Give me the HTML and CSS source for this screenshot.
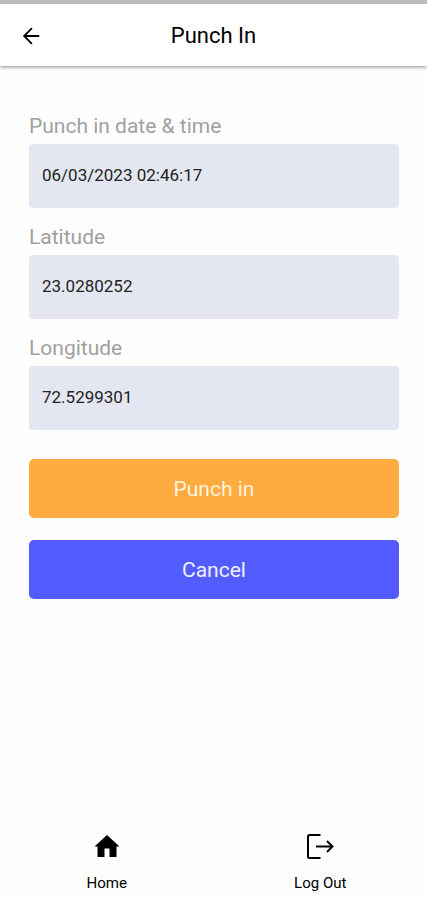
FILE: index.html
```html
<!DOCTYPE html>
<html lang="en">
<head>
<meta charset="utf-8">
<meta name="viewport" content="width=device-width, initial-scale=1">
<title>Punch In</title>
<link rel="stylesheet" href="styles.css">
</head>
<body>
<header class="app-bar">
  <button class="back" type="button" aria-label="Back">
    <svg viewBox="0 0 24 24" width="24" height="24" fill="none" stroke="currentColor" stroke-width="2"><path d="M21 12H4.500M13 3.500L4.500 12l8.500 8.500"/></svg>
  </button>
  <h1 class="title">Punch In</h1>
</header>
<main class="content">
  <form class="form">
    <div class="field">
      <label for="time">Punch in date &amp; time</label>
      <input id="time" type="text" value="06/03/2023 02:46:17" readonly>
    </div>
    <div class="field">
      <label for="lat">Latitude</label>
      <input id="lat" type="text" value="23.0280252" readonly>
    </div>
    <div class="field">
      <label for="lng">Longitude</label>
      <input id="lng" type="text" value="72.5299301" readonly>
    </div>
    <div class="actions">
      <button class="btn btn-primary" type="button">Punch in</button>
      <button class="btn btn-cancel" type="button">Cancel</button>
    </div>
  </form>
</main>
<nav class="tabs">
  <a class="tab" href="#home">
    <svg viewBox="0 0 30 30" width="30" height="30" fill="currentColor"><path d="M12.500 26v-8.500h5V26h7V15.500h3L15 4 2.500 15.500h3V26z"/></svg>
    <span>Home</span>
  </a>
  <a class="tab" href="#logout">
    <svg viewBox="0 0 30 30" width="30" height="30" fill="none" stroke="currentColor" stroke-width="2"><path d="M15.500 4H4.500Q3 4 3 5.500v20Q3 27 4.500 27H15.500M11 15.500H27.500M22 10L27.500 15.500 22 21"/></svg>
    <span>Log Out</span>
  </a>
</nav>
</body>
</html>
```
FILE: styles.css
```css
* {
  box-sizing: border-box;
}

body {
  margin: 0;
  min-height: 100vh;
  display: flex;
  flex-direction: column;
  background: #fefefe;
  color: #000;
  font-family: Roboto, "Liberation Sans", sans-serif;
}

.app-bar {
  display: grid;
  grid-template-columns: 24px 1fr 24px;
  align-items: center;
  height: 66px;
  padding: 1px 20px 0;
  border-top: 4px solid #bdbdbd;
  background: #fff;
  box-shadow: 0 1px 4px rgba(0, 0, 0, 0.45);
}

.back {
  display: flex;
  padding: 0;
  border: 0;
  background: none;
  color: #000;
}

.back svg {
  width: 22px;
  height: 22px;
}

.title {
  margin: 0;
  font-size: 22px;
  line-height: 29px;
  font-weight: 400;
  text-align: center;
}

.content {
  flex: 1;
  padding: 48px 28px 24px 29px;
}

.form {
  display: flex;
  flex-direction: column;
  gap: 17px;
}

.field {
  display: flex;
  flex-direction: column;
  gap: 6px;
}

.field label {
  font-size: 21px;
  line-height: 24px;
  color: #a0a0a0;
}

.field input {
  width: 100%;
  height: 64px;
  padding: 0 13px 2px;
  border: 0;
  border-radius: 4px;
  background: #e4e7f1;
  color: #222;
  font: inherit;
  font-size: 17px;
}

.actions {
  display: flex;
  flex-direction: column;
  gap: 22px;
  padding-top: 12px;
}

.btn {
  height: 59px;
  padding: 0;
  border: 0;
  border-radius: 5px;
  color: #fff;
  font: inherit;
  font-size: 21px;
}

.btn-primary {
  background: #ffab40;
  color: #fff4dc;
}

.btn-cancel {
  background: #535dff;
  color: #eef0ff;
}

.tabs {
  display: grid;
  grid-template-columns: 1fr 1fr;
  padding-bottom: 7px;
}

.tab {
  display: flex;
  flex-direction: column;
  align-items: center;
  gap: 12px;
  color: #000;
  font-size: 15px;
  line-height: 20px;
  text-decoration: none;
}
```
